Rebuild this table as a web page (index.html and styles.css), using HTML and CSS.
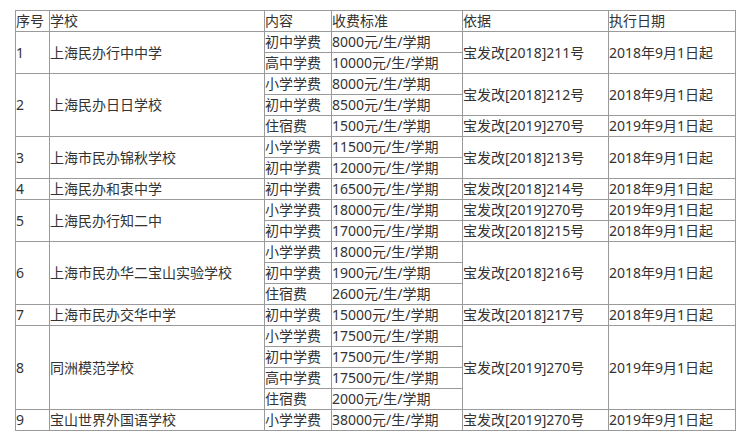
FILE: index.html
```html
<!DOCTYPE html>
<html lang="zh-CN">
<head>
<meta charset="utf-8">
<title>收费标准</title>
<link rel="stylesheet" href="styles.css">
</head>
<body>
<table class="fees">
  <colgroup>
    <col class="c-no">
    <col class="c-school">
    <col class="c-item">
    <col class="c-fee">
    <col class="c-basis">
    <col class="c-date">
  </colgroup>
  <tbody>
    <tr><td>序号</td><td>学校</td><td>内容</td><td>收费标准</td><td>依据</td><td>执行日期</td></tr>

    <tr><td rowspan="2">1</td><td rowspan="2">上海民办行中中学</td><td>初中学费</td><td>8000元/生/学期</td><td rowspan="2">宝发改[2018]211号</td><td rowspan="2">2018年9月1日起</td></tr>
    <tr><td>高中学费</td><td>10000元/生/学期</td></tr>

    <tr><td rowspan="3">2</td><td rowspan="3">上海民办日日学校</td><td>小学学费</td><td>8000元/生/学期</td><td rowspan="2">宝发改[2018]212号</td><td rowspan="2">2018年9月1日起</td></tr>
    <tr><td>初中学费</td><td>8500元/生/学期</td></tr>
    <tr><td>住宿费</td><td>1500元/生/学期</td><td>宝发改[2019]270号</td><td>2019年9月1日起</td></tr>

    <tr><td rowspan="2">3</td><td rowspan="2">上海市民办锦秋学校</td><td>小学学费</td><td>11500元/生/学期</td><td rowspan="2">宝发改[2018]213号</td><td rowspan="2">2018年9月1日起</td></tr>
    <tr><td>初中学费</td><td>12000元/生/学期</td></tr>

    <tr><td>4</td><td>上海民办和衷中学</td><td>初中学费</td><td>16500元/生/学期</td><td>宝发改[2018]214号</td><td>2018年9月1日起</td></tr>

    <tr><td rowspan="2">5</td><td rowspan="2">上海民办行知二中</td><td>小学学费</td><td>18000元/生/学期</td><td>宝发改[2019]270号</td><td>2019年9月1日起</td></tr>
    <tr><td>初中学费</td><td>17000元/生/学期</td><td>宝发改[2018]215号</td><td>2018年9月1日起</td></tr>

    <tr><td rowspan="3">6</td><td rowspan="3">上海市民办华二宝山实验学校</td><td>小学学费</td><td>18000元/生/学期</td><td rowspan="3">宝发改[2018]216号</td><td rowspan="3">2018年9月1日起</td></tr>
    <tr><td>初中学费</td><td>1900元/生/学期</td></tr>
    <tr><td>住宿费</td><td>2600元/生/学期</td></tr>

    <tr><td>7</td><td>上海市民办交华中学</td><td>初中学费</td><td>15000元/生/学期</td><td>宝发改[2018]217号</td><td>2018年9月1日起</td></tr>

    <tr><td rowspan="4">8</td><td rowspan="4">同洲模范学校</td><td>小学学费</td><td>17500元/生/学期</td><td rowspan="4">宝发改[2019]270号</td><td rowspan="4">2019年9月1日起</td></tr>
    <tr><td>初中学费</td><td>17500元/生/学期</td></tr>
    <tr><td>高中学费</td><td>17500元/生/学期</td></tr>
    <tr><td>住宿费</td><td>2000元/生/学期</td></tr>

    <tr><td>9</td><td>宝山世界外国语学校</td><td>小学学费</td><td>38000元/生/学期</td><td>宝发改[2019]270号</td><td>2019年9月1日起</td></tr>
  </tbody>
</table>
</body>
</html>
```

FILE: styles.css
```css
html, body {
  margin: 0;
  padding: 0;
  background: #ffffff;
}

body {
  padding: 10px 0 0 15px;
  font-family: "Noto Sans", "Noto Sans CJK SC", sans-serif;
  font-size: 14px;
  color: #333333;
}

.fees {
  border-collapse: collapse;
  table-layout: fixed;
  width: 721px;
}

.fees td {
  border: 1px solid #9a9a9a;
  padding: 0;
  height: 20px;
  line-height: 20px;
  white-space: nowrap;
  overflow: hidden;
  vertical-align: middle;
  text-align: left;
}

.c-no { width: 34px; }
.c-school { width: 215px; }
.c-item { width: 67px; }
.c-fee { width: 131px; }
.c-basis { width: 146px; }
.c-date { width: 127px; }
```
